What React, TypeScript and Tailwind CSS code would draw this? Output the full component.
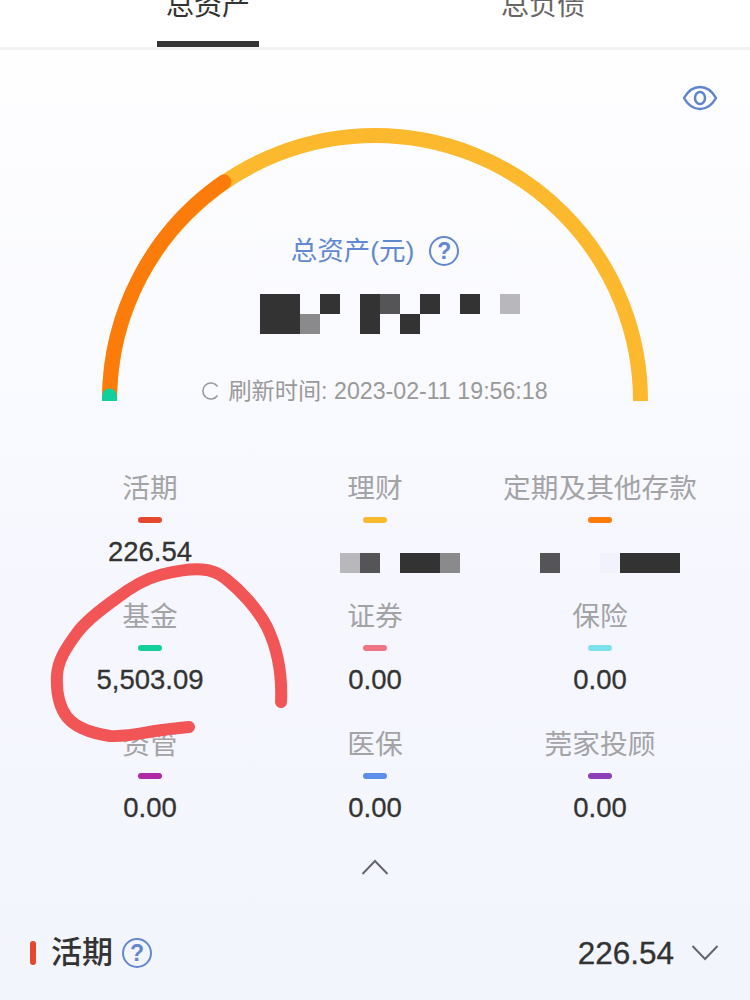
const font = "font-['Liberation_Sans','Noto_Sans_CJK_SC',sans-serif]";

const D = 'bg-[#333333]';
const M = 'bg-[#555558]';
const G = 'bg-[#8a8a8c]';
const L = 'bg-[#b8b8bc]';
const F = 'bg-[#f1f2fb]';
const _ = 'bg-transparent';

function Cells({ rows }: { rows: string[][] }) {
  return (
    <div className="flex flex-col">
      {rows.map((row, i) => (
        <div key={i} className="flex">
          {row.map((c, j) => (
            <div key={j} className={`w-[20px] h-[20px] ${c}`} />
          ))}
        </div>
      ))}
    </div>
  );
}

function Help({ className = '' }: { className?: string }) {
  return (
    <span
      className={`w-[30px] h-[30px] rounded-full border-2 border-[#6288d0] text-[#6288d0] text-[23px] font-bold leading-[26px] text-center shrink-0 ${className}`}
    >
      ?
    </span>
  );
}

function Chevron({ up = false }: { up?: boolean }) {
  return (
    <svg width="28" height="16" viewBox="0 0 28 16" fill="none" stroke="#66666a" strokeWidth="2">
      <path d={up ? 'M1.5 15 14 2 26.5 15' : 'M1.5 1 14 14 26.5 1'} />
    </svg>
  );
}

const items = [
  { label: '活期', bar: 'bg-[#e4492e]', value: '226.54' },
  { label: '理财', bar: 'bg-[#fdb92e]', cells: [L, M, _, D, D, G], offset: 'ml-[50px]' },
  { label: '定期及其他存款', bar: 'bg-[#fb7c0a]', cells: [M, _, _, F, D, D, D], offset: 'ml-[20px]' },
  { label: '基金', bar: 'bg-[#12cf9b]', value: '5,503.09' },
  { label: '证券', bar: 'bg-[#ef7586]', value: '0.00' },
  { label: '保险', bar: 'bg-[#7be0ee]', value: '0.00' },
  { label: '资管', bar: 'bg-[#b02aa6]', value: '0.00' },
  { label: '医保', bar: 'bg-[#5a8ee8]', value: '0.00' },
  { label: '莞家投顾', bar: 'bg-[#8e3fb8]', value: '0.00' },
];

export default function App() {
  return (
    <div className={`relative w-[750px] h-[1000px] overflow-hidden bg-gradient-to-b from-white via-[#f6f7fe] via-60% to-[#f3f5fd] ${font}`}>
      {/* tabs */}
      <div className="flex h-[50px] bg-white border-b-[3px] border-[#f3f3f5] pl-[157px] gap-[233px]">
        <div className="w-[102px] h-[47px] flex flex-col justify-between items-center">
          <span className="-mt-[8px] text-[28px] leading-[28px] text-[#333333]">总资产</span>
          <div className="w-full h-[6px] bg-[#333333]" />
        </div>
        <div className="w-[102px] h-[47px] flex flex-col items-center">
          <span className="-mt-[8px] text-[28px] leading-[28px] text-[#666666]">总负债</span>
        </div>
      </div>

      {/* gauge */}
      <div className="relative h-[418px]">
        <div className="flex justify-end pt-[35px] pr-[32px]">
          <svg width="36" height="26" viewBox="0 0 36 26" fill="none" stroke="#5f83cf" strokeWidth="2.5">
            <path d="M2 13C6 6 11 2 18 2s12 4 16 11c-4 7-9 11-16 11S6 20 2 13Z" strokeLinejoin="round" />
            <ellipse cx="18" cy="13" rx="5" ry="6" />
          </svg>
        </div>
        <svg className="absolute left-[102px] top-[78px]" width="546" height="273" viewBox="0 0 546 273" fill="none">
          <path d="M7.5 273A265.5 265.5 0 0 1 538.5 273" stroke="#fdb92e" strokeWidth="15" />
          <path d="M7.5 273A265.5 265.5 0 0 1 122 54" stroke="#fb7c0a" strokeWidth="15" strokeLinecap="round" />
          <path d="M0 273V268A7.5 7.5 0 0 1 15 268V273Z" fill="#12cf9b" />
        </svg>
        <div className="flex flex-col items-center pt-[118px]">
          <div className="flex items-center h-[44px]">
            <span className="text-[26.5px] leading-[44px] text-[#6288d0]">总资产(元)</span>
            <Help className="ml-[15px]" />
          </div>
          <div className="mt-[21px] ml-[30px] w-[260px]">
            <Cells
              rows={[
                [D, D, _, D, _, D, M, _, D, _, D, _, L],
                [D, D, G, _, _, D, _, D, _, _, _, _, _],
              ]}
            />
          </div>
          <div className="mt-[41px] flex items-center text-[23.2px] leading-[32px] text-[#999999]">
            <svg width="18" height="18" viewBox="0 0 18 18" fill="none" stroke="#999999" strokeWidth="1.6" className="mr-[8px]">
              <path d="M15.5 4.5A8 8 0 1 0 15.5 13.5" />
            </svg>
            刷新时间: 2023-02-11 19:56:18
          </div>
        </div>
      </div>

      {/* categories */}
      <div className="grid grid-cols-3 gap-y-[28px] px-[37.5px]">
        {items.map((it) => (
          <div key={it.label} className="flex flex-col items-center">
            <div className="h-[40px] text-[27.7px] leading-[42px] text-[#a3a3a6]">{it.label}</div>
            <div className={`mt-[9px] w-[24px] h-[6px] rounded-full ${it.bar}`} />
            <div className="mt-[13px] h-[32px] text-[27.5px] leading-[32px] text-[#333333] [-webkit-text-stroke:0.3px_#333333]">
              {it.value ?? (
                <div className={`pt-[17px] ${it.offset}`}>
                  <Cells rows={[it.cells ?? []]} />
                </div>
              )}
            </div>
          </div>
        ))}
      </div>

      <div className="flex justify-center mt-[35px]">
        <Chevron up />
      </div>

      {/* 活期 row */}
      <div className="flex items-center justify-between mt-[58px] pl-[30px] pr-[31px] h-[40px]">
        <div className="flex items-center">
          <div className="w-[6px] h-[24px] rounded-full bg-[#e4492e]" />
          <span className="ml-[15px] text-[31px] leading-[40px] font-medium text-[#333333]">活期</span>
          <Help className="ml-[9px]" />
        </div>
        <div className="flex items-center">
          <span className="text-[31.5px] leading-[40px] text-[#333333] [-webkit-text-stroke:0.3px_#333333]">226.54</span>
          <span className="ml-[17px]">
            <Chevron />
          </span>
        </div>
      </div>

      {/* red marker scribble */}
      <svg className="absolute left-0 top-0 pointer-events-none" width="750" height="1000" fill="none">
        <path
          d="M281 702C282 680 279 652 267 627C257 608 240 590 226 579C213 568 197 566 160 575C145 579 130 588 117 598C100 610 85 622 77 633C66 648 58 660 57 675C56 695 60 708 67 717C75 727 90 733 110 736C125 737 143 733 155 731C168 729 178 728 189 727"
          stroke="#f25555"
          strokeWidth="12"
          strokeLinecap="round"
          strokeLinejoin="round"
        />
      </svg>
    </div>
  );
}
